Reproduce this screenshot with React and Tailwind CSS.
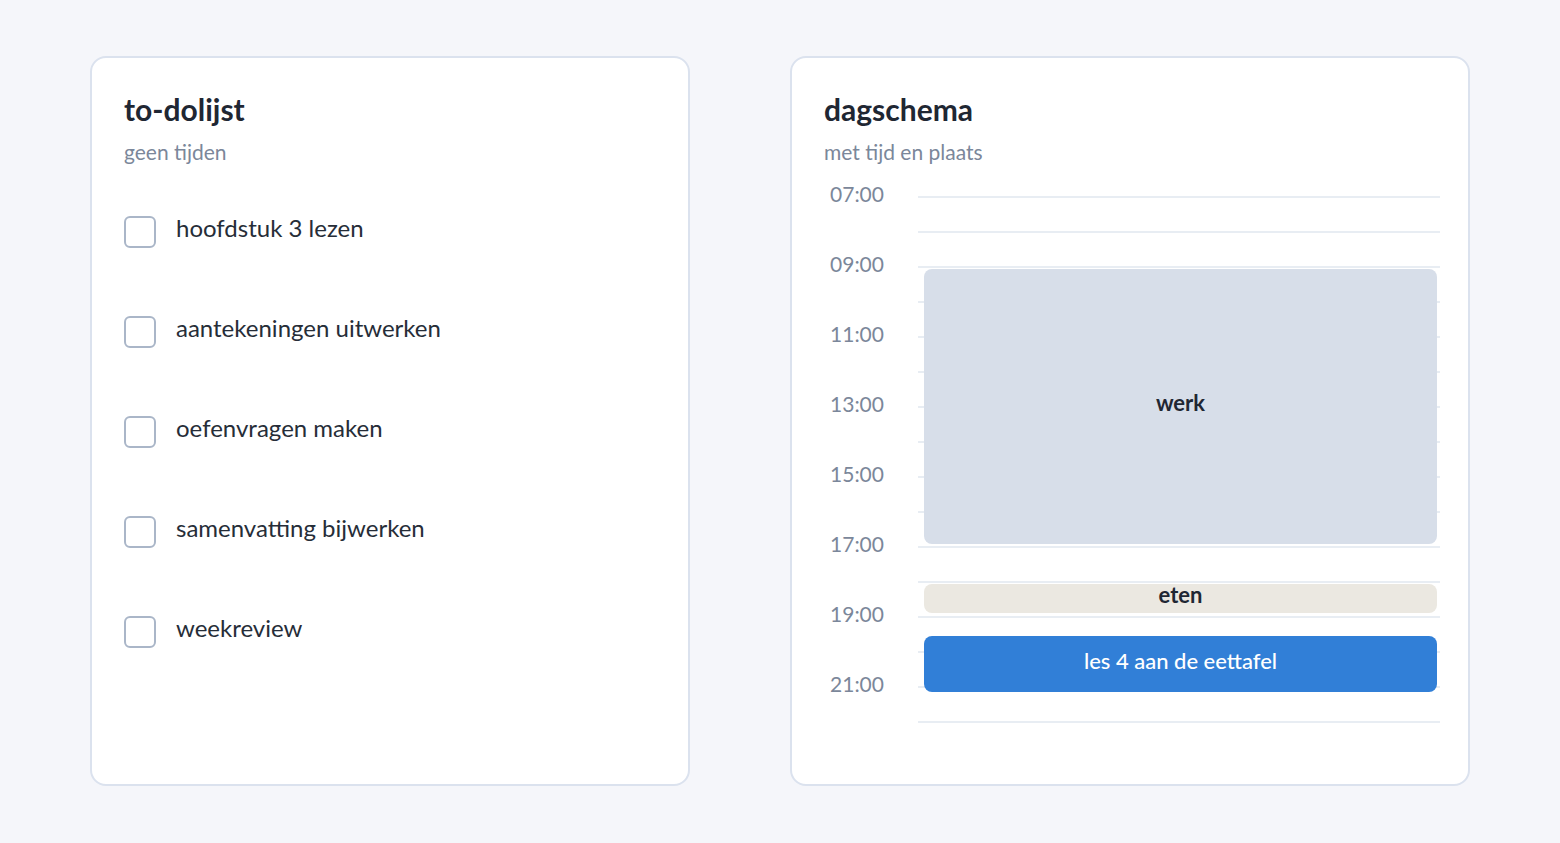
import React from 'react';

const todos = [
    'hoofdstuk 3 lezen',
    'aantekeningen uitwerken',
    'oefenvragen maken',
    'samenvatting bijwerken',
    'weekreview',
];

// hours shown in the day view, 07:00 up to 22:00
const hours = Array.from({ length: 15 }, (_, i) => 7 + i);
const HOUR = 35;

const events = [
    { title: 'werk', top: 2 * HOUR + 3, height: 275, className: 'bg-[#d7dee9] text-[#1f2733] font-bold items-center pb-2' },
    { title: 'eten', top: 11 * HOUR + 3, height: 29, className: 'bg-[#ebe8e1] text-[#1f2733] font-bold items-start leading-[22px]' },
    { title: 'les 4 aan de eettafel', top: 440, height: 56, className: 'bg-[#317fd7] text-white font-medium items-center pb-2' },
];

function Card({ title, subtitle, className, children }) {
    return (
        <div className={`bg-white border-2 border-[#dbe2ee] rounded-[16px] h-[730px] pt-[33px] pl-[32px] ${className}`}>
            <h2 className="text-[30px] font-bold text-[#1f2733] leading-[36px]">{title}</h2>
            <p className="text-[21px] text-[#7b879a] leading-[25px] mt-[12px]">{subtitle}</p>
            {children}
        </div>
    );
}

export default function App() {
    return (
        <div className="min-h-screen bg-[#f5f6fa] flex gap-[100px] px-[90px] pt-[56px]" style={{ fontFamily: 'Lato, "Noto Sans", sans-serif' }}>
            {/* To-do list */}
            <Card title="to-dolijst" subtitle="geen tijden" className="w-[600px] pr-[32px]">
                <ul className="mt-[52px] flex flex-col gap-[68px]">
                    {todos.map(item => (
                        <li key={item} className="flex items-center gap-[20px] h-[32px]">
                            <span className="w-[32px] h-[32px] rounded-[6px] border-2 border-[#aab6c8] bg-white shrink-0"></span>
                            <span className="text-[24px] leading-[28px] text-[#262d38] -mt-[8px]">{item}</span>
                        </li>
                    ))}
                </ul>
            </Card>

            {/* Day schedule */}
            <Card title="dagschema" subtitle="met tijd en plaats" className="w-[680px] pr-[28px]">
                <div className="mt-[32px] flex">
                    <div className="w-[94px] shrink-0">
                        {hours.map(h => (
                            <div key={h} className="h-[35px] flex flex-col">
                                {(h - 7) % 2 === 0 && (
                                    <div className="w-[60px] text-right text-[21px] leading-[25px] text-[#7b879a] -mt-[15px]">
                                        {String(h).padStart(2, '0')}:00
                                    </div>
                                )}
                            </div>
                        ))}
                    </div>
                    <div className="relative flex-1">
                        {hours.map(h => (
                            <div key={h} className="h-[35px] border-t-2 border-[#e8edf3]"></div>
                        ))}
                        <div className="border-t-2 border-[#e8edf3]"></div>

                        {events.map(ev => (
                            <div
                                key={ev.title}
                                className={`absolute left-[6px] right-[3px] rounded-[8px] flex justify-center text-[22px] ${ev.className}`}
                                style={{ top: ev.top, height: ev.height }}
                            >
                                {ev.title}
                            </div>
                        ))}
                    </div>
                </div>
            </Card>
        </div>
    );
}
